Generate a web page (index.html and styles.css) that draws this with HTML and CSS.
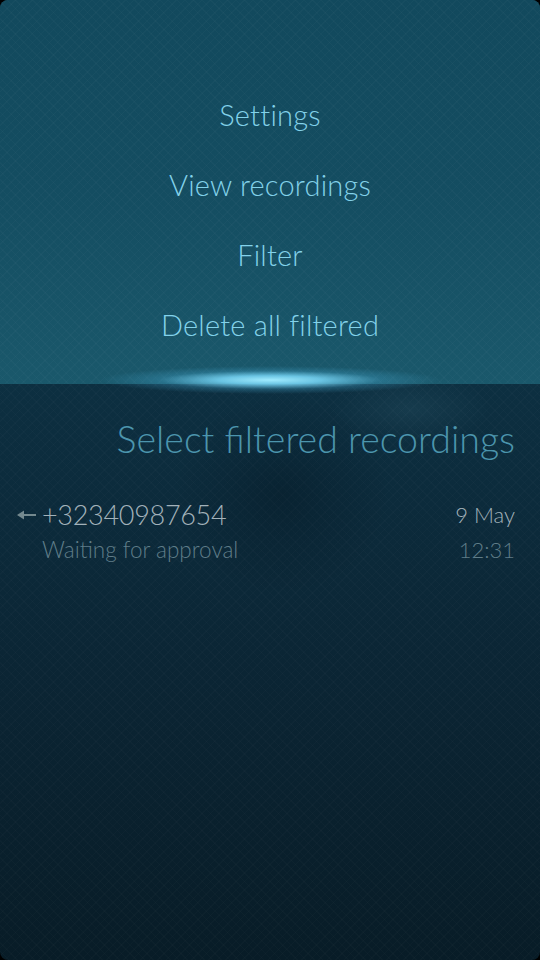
FILE: index.html
```html
<!DOCTYPE html>
<html>
<head>
<meta charset="utf-8">
<link rel="stylesheet" href="styles.css">
</head>
<body>
<div class="screen">
  <div class="pulley">
    <div class="menu">
      <div class="menu-item">Settings</div>
      <div class="menu-item">View recordings</div>
      <div class="menu-item">Filter</div>
      <div class="menu-item">Delete all filtered</div>
    </div>
    <div class="glow"></div>
  </div>
  <div class="page">
    <div class="shade"></div>
    <div class="light"></div>
    <h1 class="header">Select filtered recordings</h1>
    <div class="row">
      <div class="row-left">
        <div class="number"><svg class="arrow" width="20" height="12" viewBox="0 0 20 12"><path d="M0 6 L7 1.5 L7 5 L19 5 L19 7 L7 7 L7 10.5 Z" fill="#74898f"/></svg>+32340987654</div>
        <div class="status">Waiting for approval</div>
      </div>
      <div class="row-right">
        <div class="date">9 May</div>
        <div class="time">12:31</div>
      </div>
    </div>
  </div>
</div>
</body>
</html>
```
FILE: styles.css
```css
html, body {
  margin: 0;
  padding: 0;
  background: #000;
  width: 540px;
  height: 960px;
  overflow: hidden;
}
.screen {
  width: 540px;
  height: 960px;
  border-radius: 8px;
  overflow: hidden;
  display: flex;
  flex-direction: column;
  font-family: Lato, "Open Sans", sans-serif;
  font-weight: 300;
  position: relative;
  background:
    repeating-linear-gradient(45deg, rgba(255,255,255,0.014) 0 1px, transparent 1px 6px),
    repeating-linear-gradient(-45deg, rgba(255,255,255,0.014) 0 1px, transparent 1px 6px),
    linear-gradient(180deg, #0e3446 0%, #0d3143 35%, #0b2534 70%, #081c27 100%);
}
.pulley {
  height: 384px;
  position: relative;
  background:
    repeating-linear-gradient(45deg, rgba(255,255,255,0.018) 0 1px, transparent 1px 6px),
    repeating-linear-gradient(-45deg, rgba(255,255,255,0.018) 0 1px, transparent 1px 6px),
    linear-gradient(180deg, #12495d 0%, #144d61 50%, #1a586b 100%);
  display: flex;
  flex-direction: column;
  justify-content: flex-end;
}
.menu {
  display: flex;
  flex-direction: column;
  align-items: center;
  padding-bottom: 24px;
}
.menu-item {
  height: 70px;
  line-height: 70px;
  font-size: 29px;
  color: #83d2ea;
  letter-spacing: 0.2px;
}
.glow {
  position: absolute;
  left: 50%;
  bottom: -10px;
  width: 340px;
  height: 28px;
  margin-left: -170px;
  background: radial-gradient(ellipse closest-side at center, rgba(160,235,255,1) 0%, rgba(120,215,248,0.85) 30%, rgba(70,170,210,0.3) 65%, rgba(60,150,190,0) 100%);
}
.page {
  flex: 1;
  position: relative;
  padding: 0 25px 0 16px;
}
.shade {
  position: absolute;
  left: 150px;
  top: 10px;
  width: 240px;
  height: 200px;
  background: radial-gradient(ellipse closest-side at 55% 50%, rgba(0,12,22,0.28) 0%, rgba(0,12,22,0.12) 50%, rgba(0,12,22,0) 100%);
  pointer-events: none;
}
.light {
  position: absolute;
  left: 330px;
  top: -10px;
  width: 160px;
  height: 70px;
  background: radial-gradient(ellipse closest-side at center, rgba(90,150,170,0.12) 0%, rgba(90,150,170,0) 100%);
  pointer-events: none;
}
.header {
  position: relative;
  margin: 0;
  padding-top: 33px;
  height: 80px;
  box-sizing: border-box;
  text-align: right;
  font-weight: 300;
  font-size: 37.5px;
  line-height: 44px;
  color: #4c95ad;
}
.row {
  position: relative;
  display: flex;
  justify-content: space-between;
  margin-top: 34px;
}
.row-left, .row-right {
  display: flex;
  flex-direction: column;
}
.row-right {
  align-items: flex-end;
}
.number {
  display: flex;
  align-items: center;
  font-size: 27px;
  letter-spacing: -0.3px;
  line-height: 34px;
  color: #a3b2ba;
}
.arrow {
  margin-left: 1px;
  margin-right: 5px;
}
.status {
  padding-left: 26px;
  font-size: 22.5px;
  line-height: 36px;
  color: #5f7c88;
}
.date {
  font-size: 22px;
  line-height: 34px;
  color: #a3b2ba;
}
.time {
  font-size: 22px;
  line-height: 36px;
  color: #5f7c88;
}
```
